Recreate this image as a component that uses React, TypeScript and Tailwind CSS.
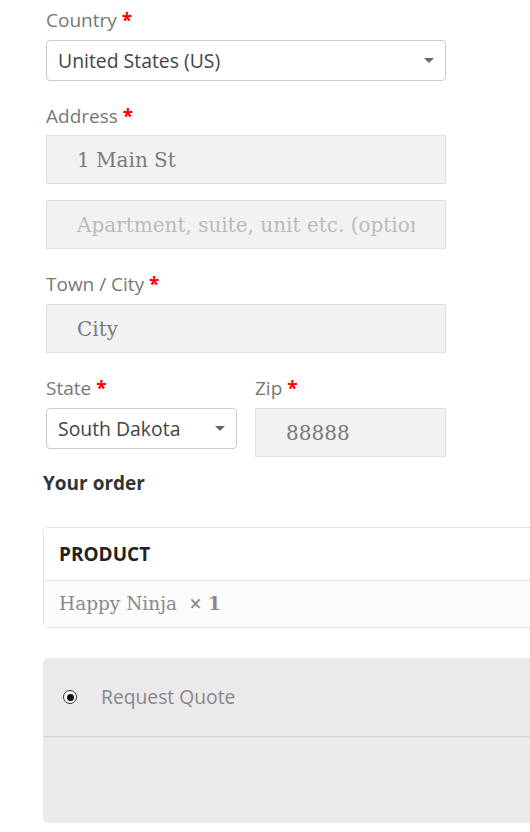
import React from "react";

const sans = "font-['Open_Sans',sans-serif]";
const serif = "font-['DejaVu_Serif',serif]";

function Label({ text }: { text: string }) {
    return (
        <div className={`${sans} h-[27px] text-[19px] leading-[27px] text-[#777]`}>
            {text} <span className="font-bold text-[#f00]">*</span>
        </div>
    );
}

function Select({ value, className = "" }: { value: string; className?: string }) {
    return (
        <div
            className={`flex h-[41px] items-center justify-between rounded-[4px] border border-[#ccc] bg-white pl-[11px] pr-[11px] ${className}`}
        >
            <span className={`${sans} text-[19.4px] text-[#444]`}>{value}</span>
            <svg width="10" height="5" viewBox="0 0 10 5">
                <path d="M0 0h10L5 5z" fill="#666" />
            </svg>
        </div>
    );
}

function Input({ value, placeholder = false, className = "" }: { value: string; placeholder?: boolean; className?: string }) {
    return (
        <div
            className={`flex h-[49px] items-center overflow-hidden whitespace-nowrap border border-[#e0e0e0] bg-[#f2f2f2] pl-[30px] pr-[30px] ${className}`}
        >
            <span className={`${serif} overflow-hidden text-[20px] ${placeholder ? "text-[#bbb]" : "text-[#7a7a7a]"}`}>
                {value}
            </span>
        </div>
    );
}

export default function App() {
    return (
        <div className="h-[832px] w-[530px] overflow-hidden bg-white">
            <div className="w-[446px] pl-[46px] pt-[7px]">
                <Label text="Country" />
                <Select value="United States (US)" className="mt-[6px]" />

                <div className="mt-[22px]">
                    <Label text="Address" />
                </div>
                <Input value="1 Main St" className="mt-[5px]" />
                <Input value="Apartment, suite, unit etc. (optional)" placeholder className="mt-[16px]" />

                <div className="mt-[22px]">
                    <Label text="Town / City" />
                </div>
                <Input value="City" className="mt-[6px]" />

                <div className="mt-[22px] flex gap-[18px]">
                    <div className="w-[191px]">
                        <Label text="State" />
                        <Select value="South Dakota" className="mt-[6px]" />
                    </div>
                    <div className="flex-1">
                        <Label text="Zip" />
                        <Input value="88888" className="mt-[6px]" />
                    </div>
                </div>
            </div>

            <div className="pl-[43px]">
                <h3 className={`${sans} mt-[13px] h-[27px] text-[19px] font-bold leading-[27px] text-[#333]`}>Your order</h3>

                <div className="mt-[30px] w-[600px] overflow-hidden rounded-[5px] border border-[#e3e3e3]">
                    <div className={`${sans} flex h-[53px] items-center border-b border-[#e3e3e3] bg-white pl-[15px] text-[19px] font-bold text-[#222]`}>
                        PRODUCT
                    </div>
                    <div className={`${serif} flex h-[46px] items-center bg-[#fcfcfc] pl-[15px] text-[18.5px] text-[#888]`}>
                        Happy Ninja&nbsp;&nbsp;<span className="text-[16px] font-bold">×</span>&nbsp;<span className="font-bold">1</span>
                    </div>
                </div>

                <div className="mt-[30px] w-[600px] rounded-[6px] bg-[#ebe9eb]">
                    <div className="flex h-[79px] items-center border-b border-[#d4d2d4] pl-[20px]">
                        <span className="flex h-[14px] w-[14px] items-center justify-center rounded-full border border-[#333] bg-white">
                            <span className="h-[7px] w-[7px] rounded-full bg-[#111]" />
                        </span>
                        <span className={`${sans} ml-[24px] text-[19.3px] text-[#888]`}>Request Quote</span>
                    </div>
                    <div className="h-[86px]" />
                </div>
            </div>
        </div>
    );
}
